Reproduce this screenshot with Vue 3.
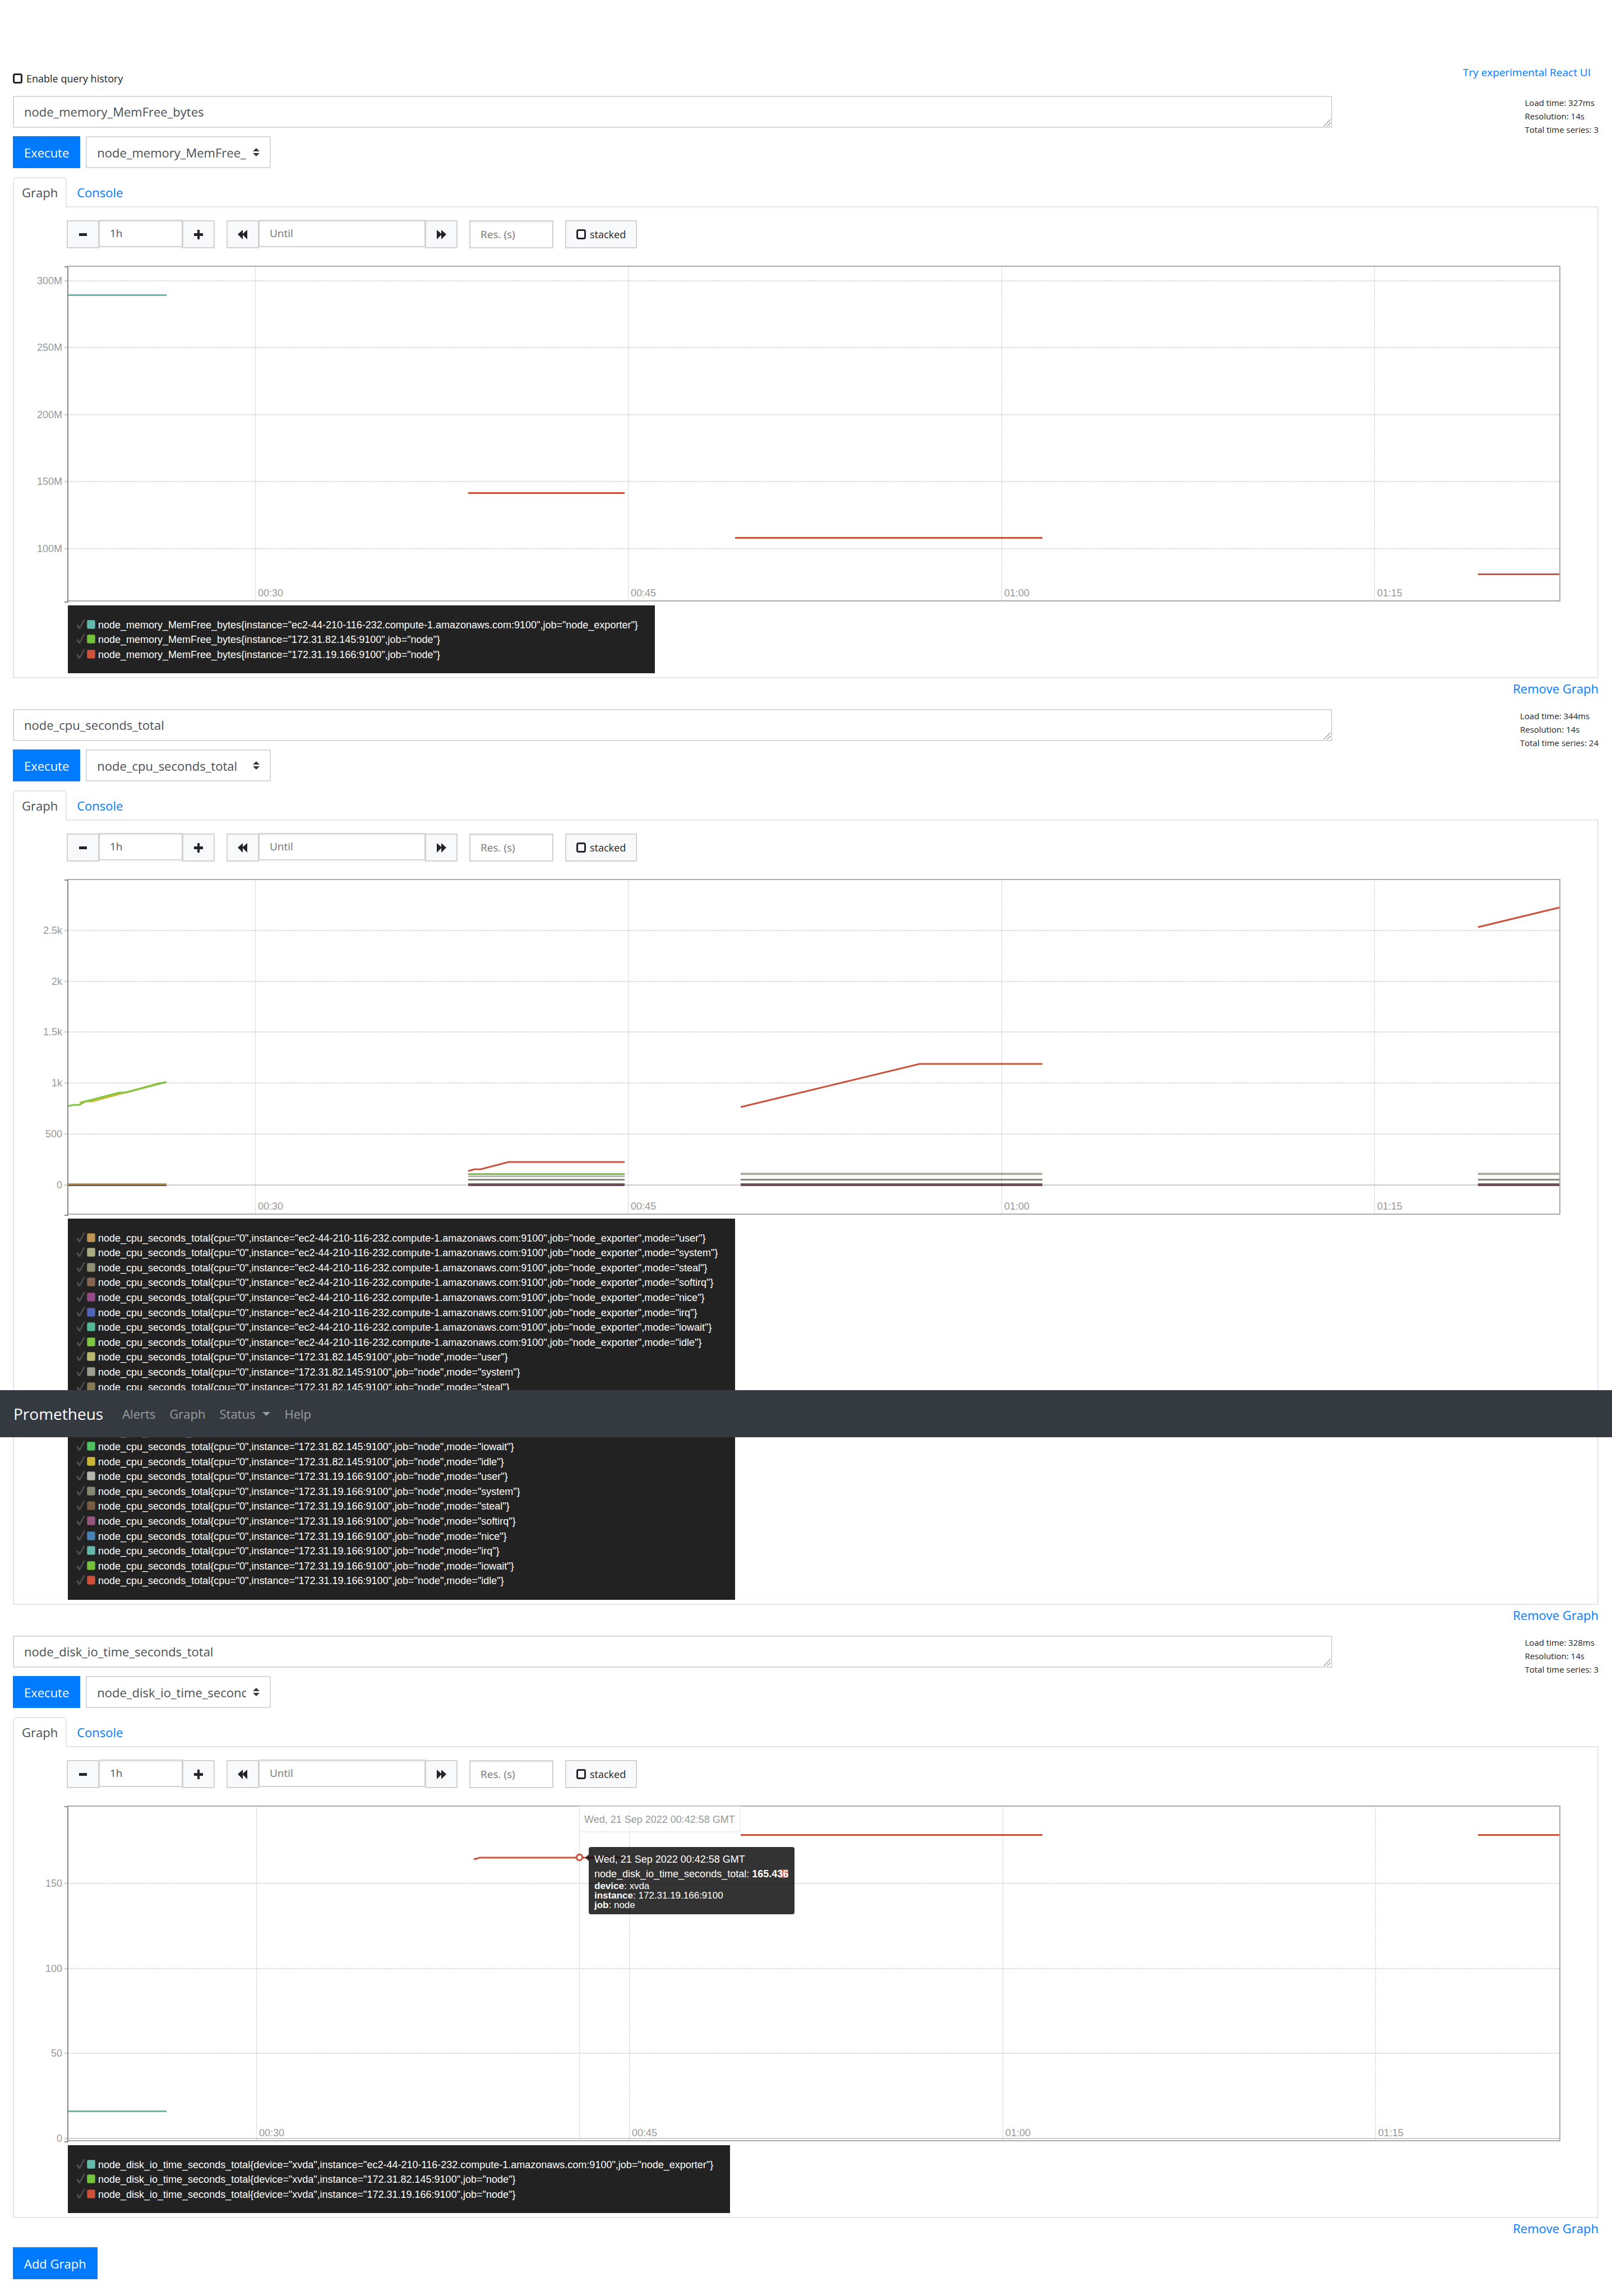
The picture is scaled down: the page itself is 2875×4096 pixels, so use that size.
<script setup>
const colors = {
  teal: '#65b9ac',
  green: '#73c03a',
  lime: '#80c642',
  red: '#cb513a'
}

const ec2 = 'ec2-44-210-116-232.compute-1.amazonaws.com:9100'
const nodeA = '172.31.82.145:9100'
const nodeB = '172.31.19.166:9100'

const targets = [
  { instance: ec2, job: 'node_exporter' },
  { instance: nodeA, job: 'node' },
  { instance: nodeB, job: 'node' }
]
const targetColors = [colors.teal, colors.green, colors.red]

const modes = ['user', 'system', 'steal', 'softirq', 'nice', 'irq', 'iowait', 'idle']
const cpuColors = [
  ['#c09453', '#a9ac7f', '#8f9072', '#86644f', '#964b87', '#5065b5', '#55b895', '#7ec641'],
  ['#b9b86e', '#9a9d8c', '#877a56', '#8d5a62', '#7a5596', '#4d86b0', '#4fbf62', '#c9b636'],
  ['#b5b6a9', '#858772', '#785d43', '#96557e', '#4682b4', colors.teal, colors.green, colors.red]
]

const memoryLegend = targets.map((t, i) => ({
  color: targetColors[i],
  label: `node_memory_MemFree_bytes{instance="${t.instance}",job="${t.job}"}`
}))
const cpuLegend = targets.flatMap((t, i) =>
  modes.map((mode, m) => ({
    color: cpuColors[i][m],
    label: `node_cpu_seconds_total{cpu="0",instance="${t.instance}",job="${t.job}",mode="${mode}"}`
  }))
)
const diskLegend = targets.map((t, i) => ({
  color: targetColors[i],
  label: `node_disk_io_time_seconds_total{device="xvda",instance="${t.instance}",job="${t.job}"}`
}))

/* Plot area units: 2661 wide, 597 high. */
const W = 2661
const H = 597

function flat(y, color, spans) {
  return spans.map(([a, b]) => ({ color, crisp: true, points: `${a},${y} ${b},${y}` }))
}
const S1 = [0, 176]
const S2 = [714, 993]
const S3 = [1200, 1738]
const S4 = [2515, 2660]

const graphs = [
  {
    metric: 'node_memory_MemFree_bytes',
    load: '327ms',
    total: 3,
    ticks: [
      { y: 26, text: '300M' },
      { y: 145, text: '250M' },
      { y: 265, text: '200M' },
      { y: 384, text: '150M' },
      { y: 504, text: '100M' }
    ],
    shift: 0,
    series: [
      ...flat(51, colors.teal, [S1]),
      ...flat(404, colors.red, [S2]),
      ...flat(484, colors.red, [[1190, 1738]]),
      ...flat(549, colors.red, [S4])
    ],
    legend: memoryLegend
  },
  {
    metric: 'node_cpu_seconds_total',
    load: '344ms',
    total: 24,
    ticks: [
      { y: 91, text: '2.5k' },
      { y: 182, text: '2k' },
      { y: 272, text: '1.5k' },
      { y: 363, text: '1k' },
      { y: 454, text: '500' },
      { y: 545, text: '0', solid: true }
    ],
    shift: 0,
    series: [
      { color: '#c9b636', points: '21,398 31,396 43,396 165,363' },
      { color: colors.lime, points: '0,404 11,402 21,402 31,396 92,380 104,380 176,361' },
      ...flat(545, '#785f52', [S1]),
      ...flat(543, '#c09453', [S1]),
      ...flat(545, '#7a5596', [S2, S3, S4]),
      ...flat(543, '#785d43', [S2, S3, S4]),
      ...flat(535, '#858772', [S2, S3, S4]),
      ...flat(529, '#b5b6a9', [S2]),
      ...flat(525, colors.green, [S2, S3, S4]),
      ...flat(524, '#b5b6a9', [S3, S4]),
      { color: colors.red, points: '714,520 725,517 736,517 786,504 993,504' },
      { color: colors.red, points: '1200,406 1519,329 1738,329' },
      { color: colors.red, points: '2515,85 2660,50' }
    ],
    legend: cpuLegend
  },
  {
    metric: 'node_disk_io_time_seconds_total',
    load: '328ms',
    total: 3,
    ticks: [
      { y: 138, text: '150' },
      { y: 290, text: '100' },
      { y: 441, text: '50' },
      { y: 593, text: '0', solid: true }
    ],
    shift: 2,
    series: [
      ...flat(544, colors.teal, [S1]),
      { color: colors.red, points: '724,95 735,92 990,92' },
      ...flat(51, colors.red, [S3, S4])
    ],
    legend: diskLegend,
    hover: {
      x: 912,
      y: 92,
      date: 'Wed, 21 Sep 2022 00:42:58 GMT',
      value: '165.436',
      labels: [
        ['device', 'xvda'],
        ['instance', nodeB],
        ['job', 'node']
      ]
    }
  }
]

const times = [
  { x: 334, text: '00:30' },
  { x: 999, text: '00:45' },
  { x: 1665, text: '01:00' },
  { x: 2330, text: '01:15' }
]

const pctX = (x) => `${(x / W) * 100}%`
const pctY = (y) => `${(y / H) * 100}%`
</script>

<template>
  <div class="page">
    <nav class="navbar">
      <a class="brand" href="#">Prometheus</a>
      <a class="nav-link" href="#">Alerts</a>
      <a class="nav-link" href="#">Graph</a>
      <a class="nav-link" href="#">Status
        <svg class="caret" width="14" height="7" viewBox="0 0 14 7" aria-hidden="true"><path d="M0 0h14L7 7z" fill="currentColor" /></svg>
      </a>
      <a class="nav-link" href="#">Help</a>
    </nav>

    <header class="header">
      <label class="history"><input class="tick" type="checkbox">Enable query history</label>
      <a class="try-link" href="#">Try experimental React UI</a>
    </header>

    <section v-for="g in graphs" :key="g.metric" class="graph">
      <div class="query">
        <div class="expression">
          <textarea class="expression-input" rows="1" aria-label="Expression" :value="g.metric"></textarea>
          <svg class="grip" width="14" height="14" viewBox="0 0 14 14" aria-hidden="true"><path d="M1 13L13 1M7 13L13 7" stroke="#555" stroke-width="1" fill="none" /></svg>
        </div>
        <div class="stats">
          <div>Load time: {{ g.load }}</div>
          <div>Resolution: 14s</div>
          <div>Total time series: {{ g.total }}</div>
        </div>
      </div>

      <div class="actions">
        <button class="btn-primary" type="button">Execute</button>
        <div class="metric">
          <select class="metric-select" aria-label="Metric">
            <option>{{ g.metric }}</option>
          </select>
          <svg class="arrows" width="12" height="15" viewBox="0 0 12 15" aria-hidden="true"><path d="M6 0l6 6H0zM6 15l6-6H0z" fill="#343a40" /></svg>
        </div>
      </div>

      <div class="tabs">
        <a class="tab active" href="#">Graph</a>
        <a class="tab" href="#">Console</a>
      </div>

      <div class="panel">
        <div class="controls">
          <div class="group">
            <button class="step" type="button" aria-label="Shrink range">
              <svg width="18" height="18" viewBox="0 0 18 18"><path d="M2 7h14v5H2z" fill="currentColor" /></svg>
            </button>
            <input class="field range" type="text" value="1h" aria-label="Range">
            <button class="step" type="button" aria-label="Grow range">
              <svg width="18" height="18" viewBox="0 0 18 18"><path d="M7 1h4v6h6v5h-6v6H7v-6H1V7h6z" fill="currentColor" /></svg>
            </button>
          </div>
          <div class="group">
            <button class="step" type="button" aria-label="Rewind">
              <svg width="18" height="18" viewBox="0 0 18 18"><path d="M0 9L9 1v7l8-7v17l-8-8v8z" fill="currentColor" /></svg>
            </button>
            <input class="field until" type="text" placeholder="Until" aria-label="Until">
            <button class="step" type="button" aria-label="Forward">
              <svg width="18" height="18" viewBox="0 0 18 18"><path d="M18 9L9 1v7L1 1v17l8-8v8z" fill="currentColor" /></svg>
            </button>
          </div>
          <input class="field resolution" type="text" placeholder="Res. (s)" aria-label="Resolution">
          <label class="stacked"><input class="tick" type="checkbox">stacked</label>
        </div>

        <div class="chart">
          <svg class="plot" :viewBox="`0 0 ${W} ${H}`" preserveAspectRatio="none" aria-hidden="true">
            <polyline v-for="(s, si) in g.series" :key="si" class="series" :class="{ crisp: s.crisp }" :points="s.points" :stroke="s.color" />
            <line v-for="t in g.ticks" :key="t.text" class="grid" :class="{ solid: t.solid }" x1="0" :x2="W" :y1="t.y" :y2="t.y" />
            <line v-for="t in times" :key="t.text" class="grid vertical" :x1="t.x + g.shift" :x2="t.x + g.shift" y1="0" :y2="H" />
            <path v-for="t in g.ticks" :key="'m' + t.text" class="mark" :d="`M-6 ${t.y}H0`" />
            <path class="frame" :d="`M0 0H${W}V${H}H0`" />
            <path class="axis" :d="`M-6 1H0V${H + 2}H-6`" />
          </svg>
          <span v-for="t in g.ticks" :key="t.text" class="y-label" :style="{ top: pctY(t.y) }">{{ t.text }}</span>
          <span v-for="t in times" :key="t.text" class="x-label" :style="{ left: pctX(t.x + g.shift) }">{{ t.text }}</span>
          <div v-if="g.hover" class="hover" :style="{ left: pctX(g.hover.x) }">
            <div class="hover-date">{{ g.hover.date }}</div>
            <div class="dot" :style="{ top: pctY(g.hover.y) }"></div>
            <div class="tooltip" :style="{ top: pctY(g.hover.y) }">
              <div class="tooltip-date">{{ g.hover.date }}</div>
              <div class="tooltip-value"><i class="swatch-behind"></i><span>{{ g.metric }}: <b>{{ g.hover.value }}</b></span></div>
              <div v-for="[k, v] in g.hover.labels" :key="k" class="tooltip-label"><b>{{ k }}</b>: {{ v }}</div>
            </div>
          </div>
        </div>

        <ul class="legend">
          <li v-for="(e, ei) in g.legend" :key="ei" class="entry">
            <svg class="check" width="16" height="18" viewBox="0 0 16 18" aria-hidden="true"><path d="M0 10l3-1 3 4 7-13h3L7 17H4z" fill="#4d4d4d" /></svg>
            <i class="swatch" :style="{ background: e.color }"></i>
            <span>{{ e.label }}</span>
          </li>
        </ul>
      </div>
      <div class="remove"><a href="#">Remove Graph</a></div>
    </section>

    <button class="btn-primary add" type="button">Add Graph</button>
  </div>
</template>

<style>
body {
  margin: 0;
  background: #fff;
}
</style>

<style scoped>
* {
  box-sizing: border-box;
}
.page {
  position: relative;
  padding: 0 24px 30px 23px;
  font: 22px/36px "Open Sans", "Noto Sans", sans-serif;
  color: #212529;
}
a {
  color: #007bff;
  text-decoration: none;
}
button,
input,
select,
textarea {
  font: inherit;
  color: inherit;
  margin: 0;
  border-radius: 0;
}

.navbar {
  position: absolute;
  z-index: 5;
  top: 2480px;
  left: 0;
  right: 0;
  height: 84px;
  padding: 0 24px;
  display: flex;
  align-items: center;
  gap: 25px;
  background: #343a40;
}
.brand {
  margin-right: 9px;
  font-size: 28px;
  color: #fff;
}
.nav-link {
  display: flex;
  align-items: center;
  gap: 13px;
  color: rgba(255, 255, 255, 0.5);
}

.header {
  display: flex;
  justify-content: space-between;
  align-items: flex-start;
  padding: 113px 14px 19px 0;
}
.history {
  display: flex;
  align-items: center;
  gap: 7px;
  margin-top: 15px;
  font-size: 18px;
  line-height: 24px;
}
.tick {
  appearance: none;
  width: 17px;
  height: 18px;
  border: 3px solid #212529;
  border-radius: 4px;
}
.try-link {
  font-size: 19px;
  line-height: 32px;
}

.graph + .graph {
  margin-top: 19px;
}
.query {
  display: flex;
  justify-content: space-between;
  height: 57px;
}
.expression {
  position: relative;
  width: 83.2%;
}
.expression-input {
  display: block;
  width: 100%;
  height: 57px;
  padding: 8px 18px;
  border: 2px solid #d4d9df;
  color: #495057;
  line-height: 36px;
  resize: none;
  overflow: hidden;
  background: #fff;
}
.grip {
  position: absolute;
  right: 2px;
  bottom: 2px;
}
.stats {
  font-size: 15px;
  line-height: 24px;
}

.actions {
  display: flex;
  gap: 10px;
  margin-top: 15px;
}
.btn-primary {
  height: 57px;
  padding: 0 20px;
  border: 0;
  background: #007bff;
  color: #fff;
}
.metric {
  position: relative;
}
.metric-select {
  appearance: none;
  display: block;
  width: 330px;
  height: 57px;
  padding: 0 42px 0 18px;
  border: 2px solid #d4d9df;
  background: #fff;
  color: #495057;
}
.arrows {
  position: absolute;
  right: 20px;
  top: 21px;
  pointer-events: none;
}

.tabs {
  display: flex;
  gap: 2px;
  height: 52px;
  margin-top: 16px;
}
.tab {
  height: 54px;
  padding: 7px 14px;
  border: 2px solid transparent;
  border-bottom: 0;
}
.tab.active {
  position: relative;
  background: #fff;
  border-color: #e2e6ea;
  border-radius: 6px 6px 0 0;
  color: #495057;
}
.panel {
  padding: 23px 67px 7px 94px;
  border: 2px solid #e2e6ea;
}

.controls {
  display: flex;
  gap: 21px;
  font-size: 19px;
}
.group {
  display: flex;
}
.step {
  display: flex;
  align-items: center;
  justify-content: center;
  width: 58px;
  height: 50px;
  padding: 0;
  border: 2px solid #d2d2d2;
  background: #f8f9fa;
  color: #212529;
}
.field {
  height: 50px;
  padding: 0 18px;
  border: 2px solid #d2d2d2;
  background: #fff;
  color: #555;
  box-shadow: inset 0 2px 2px rgba(0, 0, 0, 0.075);
}
.field::placeholder {
  color: #757575;
  opacity: 1;
}
.group .field {
  height: 49px;
  margin: -1px -1px 0;
  padding-bottom: 2px;
}
.range,
.resolution {
  width: 150px;
}
.until {
  width: 298px;
}
.stacked {
  display: flex;
  align-items: center;
  gap: 7px;
  width: 128px;
  height: 50px;
  padding-left: 18px;
  border: 2px solid #d2d2d2;
  background: #f8f9fa;
  font-size: 18px;
}

.chart {
  position: relative;
  height: 597px;
  margin: 32px 0 0 2px;
  font: 18px/24px "Liberation Sans", Arial, sans-serif;
  color: #999;
}
.plot {
  display: block;
  width: 100%;
  height: 100%;
  overflow: visible;
}
.series {
  fill: none;
  stroke-width: 3px;
}
.series.crisp {
  shape-rendering: crispEdges;
}
.grid {
  stroke: rgba(0, 0, 0, 0.14);
  stroke-width: 2px;
  stroke-dasharray: 2 1;
  shape-rendering: crispEdges;
}
.grid.vertical {
  stroke: rgba(0, 0, 0, 0.2);
  stroke-width: 1px;
}
.grid.solid {
  stroke: rgba(0, 0, 0, 0.2);
  stroke-dasharray: none;
}
.mark {
  stroke: #d4d4d4;
  stroke-width: 3px;
}
.frame {
  fill: none;
  stroke: #aaa;
  stroke-width: 2px;
}
.axis {
  fill: none;
  stroke: #888;
  stroke-width: 2px;
}
.y-label {
  position: absolute;
  right: 100%;
  margin-right: 10px;
  transform: translateY(-50%);
}
.x-label {
  position: absolute;
  bottom: 2px;
  margin-left: 5px;
}

.hover {
  position: absolute;
  top: 0;
  bottom: 0;
  border-left: 1px solid #ddd;
}
.hover-date {
  padding: 12px 8px 9px;
  border: 2px solid #eee;
  border-top: 0;
  border-left: 0;
  border-radius: 0 0 5px 5px;
  background: rgba(255, 255, 255, 0.6);
  white-space: nowrap;
}
.dot {
  position: absolute;
  left: -7px;
  width: 13px;
  height: 13px;
  margin-top: -7px;
  border: 3px solid #cb513a;
  border-radius: 50%;
  background: #fff;
  box-shadow: 0 0 3px rgba(0, 0, 0, 0.4);
}
.tooltip {
  position: absolute;
  left: 16px;
  margin-top: -19px;
  padding: 9px 11px 8px 10px;
  border-radius: 4px;
  background: rgba(0, 0, 0, 0.8);
  color: #fff;
  white-space: nowrap;
}
.tooltip::before {
  content: "";
  position: absolute;
  left: -6px;
  top: 13px;
  border: 6px solid transparent;
  border-left: 0;
  border-right-color: rgba(0, 0, 0, 0.8);
}
.tooltip-date {
  line-height: 26px;
}
.tooltip-value {
  position: relative;
  line-height: 26px;
}
.tooltip-value span {
  position: relative;
}
.swatch-behind {
  position: absolute;
  right: 0;
  top: 5px;
  width: 15px;
  height: 15px;
  background: #cb513a;
}
.tooltip-label {
  font-size: 17px;
  line-height: 17px;
}

.legend {
  width: fit-content;
  margin: 8px 0 0 2px;
  padding: 22px 30px 20px 15px;
  list-style: none;
  background: #222;
  color: #fff;
  font: 18px/26px "Liberation Sans", Arial, sans-serif;
}
.entry {
  display: flex;
  align-items: flex-start;
  white-space: nowrap;
}
.entry:nth-child(5n),
.entry:nth-child(5n + 2),
.entry:nth-child(5n + 4) {
  padding-bottom: 1px;
}
.check {
  margin: 3px 3px 0 0;
}
.swatch {
  width: 15px;
  height: 16px;
  margin: 4px 5px 0 0;
  border: 1px solid rgba(0, 0, 0, 0.2);
  border-radius: 3px;
}

.remove {
  text-align: right;
}
.add {
  display: block;
  margin-top: 16px;
}
</style>
